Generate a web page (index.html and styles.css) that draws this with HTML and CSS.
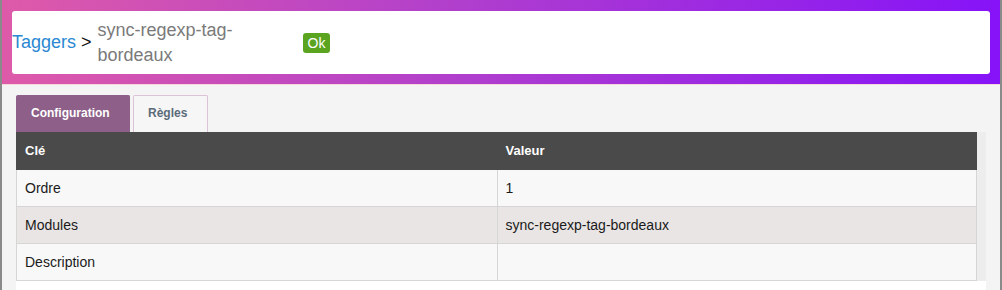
FILE: index.html
```html
<!DOCTYPE html>
<html lang="fr">
<head>
  <meta charset="UTF-8" />
  <meta name="viewport" content="width=device-width, initial-scale=1.0"/>
  <title>Tagger sync-regexp-tag-bordeaux</title>
  <link rel="stylesheet" href="styles.css">
</head>
<body>
  <div class="frame">
    <header class="topbar">
      <div class="crumb-box">
        <a class="crumb-link" href="#">Taggers</a>
        <span class="crumb-sep">&gt;</span>
        <span class="crumb-name">sync-regexp-tag-bordeaux</span>
        <span class="badge">Ok</span>
      </div>
    </header>

    <main class="content">
      <ul class="tabs">
        <li class="tab active">Configuration</li>
        <li class="tab">Règles</li>
      </ul>

      <div class="panel">
        <div class="table-scroll">
          <table class="config-table">
            <thead>
              <tr>
                <th>Clé</th>
                <th>Valeur</th>
              </tr>
            </thead>
            <tbody>
              <tr>
                <td>Ordre</td>
                <td>1</td>
              </tr>
              <tr class="alt">
                <td>Modules</td>
                <td>sync-regexp-tag-bordeaux</td>
              </tr>
              <tr>
                <td>Description</td>
                <td></td>
              </tr>
            </tbody>
          </table>
          <div class="scroll-track"></div>
        </div>
      </div>
    </main>
  </div>
</body>
</html>
```

FILE: styles.css
```css
* {
  box-sizing: border-box;
  padding: 0;
  margin: 0;
}

body {
  font-family: "Liberation Sans", Arial, sans-serif;
  background-color: #f4f4f4;
  color: #1a1a1a;
}

.frame {
  min-height: 290px;
  border-left: 2px solid #8a8a8a;
  border-right: 2px solid #8a8a8a;
}

/* header with breadcrumb */
.topbar {
  background: linear-gradient(to right, #de5aa9, #b13fcc 45%, #8613f8);
  padding: 11px 10px 10px;
  border-bottom: 1px solid #f5d8dc;
}

.crumb-box {
  display: flex;
  align-items: center;
  background-color: #fff;
  border-radius: 3px;
  height: 63px;
  font-size: 18px;
  line-height: 25px;
}

.crumb-link {
  color: #2a88d2;
  text-decoration: none;
}

.crumb-sep {
  color: #111;
  margin: 0 6px 0 5px;
}

.crumb-name {
  color: #7a7a7a;
  width: 200px;
}

.badge {
  margin-left: 5px;
  background-color: #5ba420;
  color: #fff;
  font-size: 14px;
  line-height: 20px;
  padding: 0 5px;
  border-radius: 3px;
}

/* content */
.content {
  padding: 10px 14px 0;
}

.tabs {
  display: flex;
  list-style: none;
  gap: 3px;
}

.tab {
  height: 37px;
  line-height: 35px;
  padding: 0 20px 0 14px;
  font-size: 12px;
  font-weight: bold;
  color: #5b6b79;
  background-color: #f6f6f6;
  border: 1px solid #dcc2d6;
  border-bottom: none;
  border-radius: 2px 2px 0 0;
}

.tab.active {
  width: 114px;
  padding: 0 14px;
  color: #fff;
  background-color: #8d5f89;
  border-color: #8d5f89;
}

.panel {
  background-color: #fff;
  min-height: 160px;
}

.table-scroll {
  display: flex;
}

.scroll-track {
  width: 9px;
  background-color: #ededed;
}

.config-table {
  width: 961px;
  table-layout: fixed;
  border-spacing: 0;
  font-size: 14px;
}

.config-table th {
  background-color: #4a4a4a;
  color: #fff;
  font-size: 13px;
  text-align: left;
  line-height: 16px;
  padding: 11px 9px;
}

.config-table td {
  background-color: #f8f8f8;
  line-height: 16px;
  padding: 10px 8px;
  border-bottom: 1px solid #d6d6d6;
  border-left: 1px solid #d6d6d6;
}

.config-table td:last-child {
  border-right: 1px solid #d6d6d6;
}

.config-table tr.alt td {
  background-color: #e9e5e4;
}
```
